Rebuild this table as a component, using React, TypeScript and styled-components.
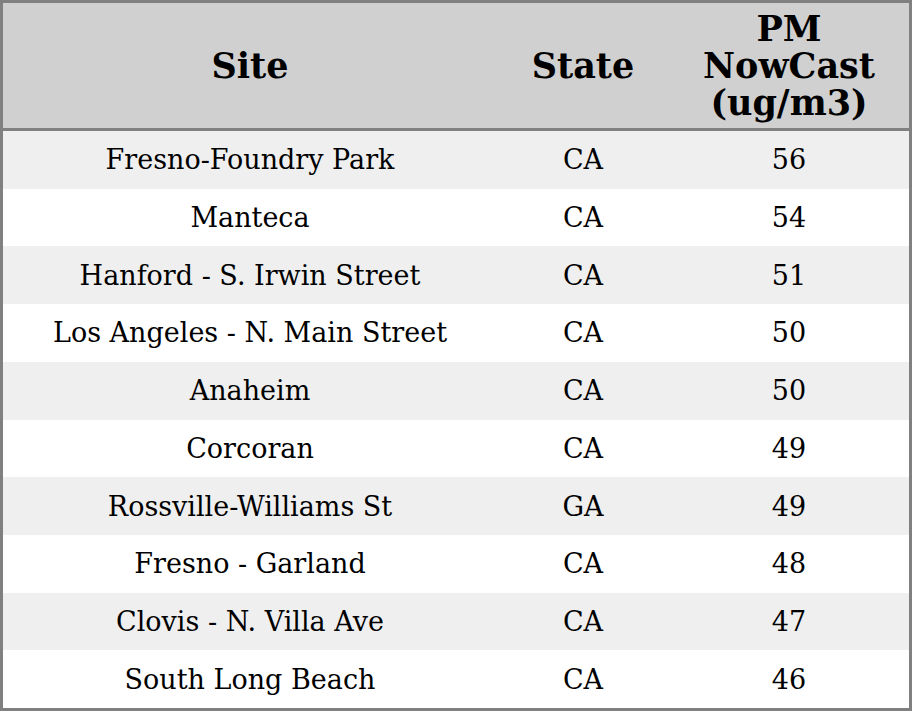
import React from 'react'
import styled, { createGlobalStyle } from 'styled-components'

const GlobalStyle = createGlobalStyle`
  html, body {
    margin: 0;
    padding: 0;
    background: #ffffff;
  }
  body {
    font-family: 'DejaVu Serif', serif;
    color: #000000;
  }
`

const Frame = styled.div`
  width: 912px;
  height: 711px;
  box-sizing: border-box;
  border: 3px solid #808080;
  display: grid;
  grid-template-rows: 125px 3px repeat(10, 1fr);
  background: #ffffff;
`

const HeaderRow = styled.div`
  display: grid;
  grid-template-columns: 494px 172px 1fr;
  background: #d0d0d0;
`

const HeaderCell = styled.div`
  display: flex;
  align-items: center;
  justify-content: center;
  text-align: center;
  font-weight: bold;
  font-size: 35px;
  line-height: 37px;
`

const Rule = styled.div`
  background: #808080;
`

const Row = styled.div<{ $shaded: boolean }>`
  display: grid;
  grid-template-columns: 494px 172px 1fr;
  background: ${(p) => (p.$shaded ? '#efefef' : '#ffffff')};
`

const Cell = styled.div`
  display: flex;
  align-items: center;
  justify-content: center;
  font-size: 27px;
  line-height: 1;
`

interface Reading {
  site: string
  state: string
  value: number
}

const readings: Reading[] = [
  { site: 'Fresno-Foundry Park', state: 'CA', value: 56 },
  { site: 'Manteca', state: 'CA', value: 54 },
  { site: 'Hanford - S. Irwin Street', state: 'CA', value: 51 },
  { site: 'Los Angeles - N. Main Street', state: 'CA', value: 50 },
  { site: 'Anaheim', state: 'CA', value: 50 },
  { site: 'Corcoran', state: 'CA', value: 49 },
  { site: 'Rossville-Williams St', state: 'GA', value: 49 },
  { site: 'Fresno - Garland', state: 'CA', value: 48 },
  { site: 'Clovis - N. Villa Ave', state: 'CA', value: 47 },
  { site: 'South Long Beach', state: 'CA', value: 46 },
]

const App: React.FC = () => (
  <>
    <GlobalStyle />
    <Frame>
      <HeaderRow>
        <HeaderCell>Site</HeaderCell>
        <HeaderCell>State</HeaderCell>
        <HeaderCell>
          PM
          <br />
          NowCast
          <br />
          (ug/m3)
        </HeaderCell>
      </HeaderRow>
      <Rule />
      {readings.map((r, i) => (
        <Row key={i} $shaded={i % 2 === 0}>
          <Cell>{r.site}</Cell>
          <Cell>{r.state}</Cell>
          <Cell>{r.value}</Cell>
        </Row>
      ))}
    </Frame>
  </>
)

export default App
